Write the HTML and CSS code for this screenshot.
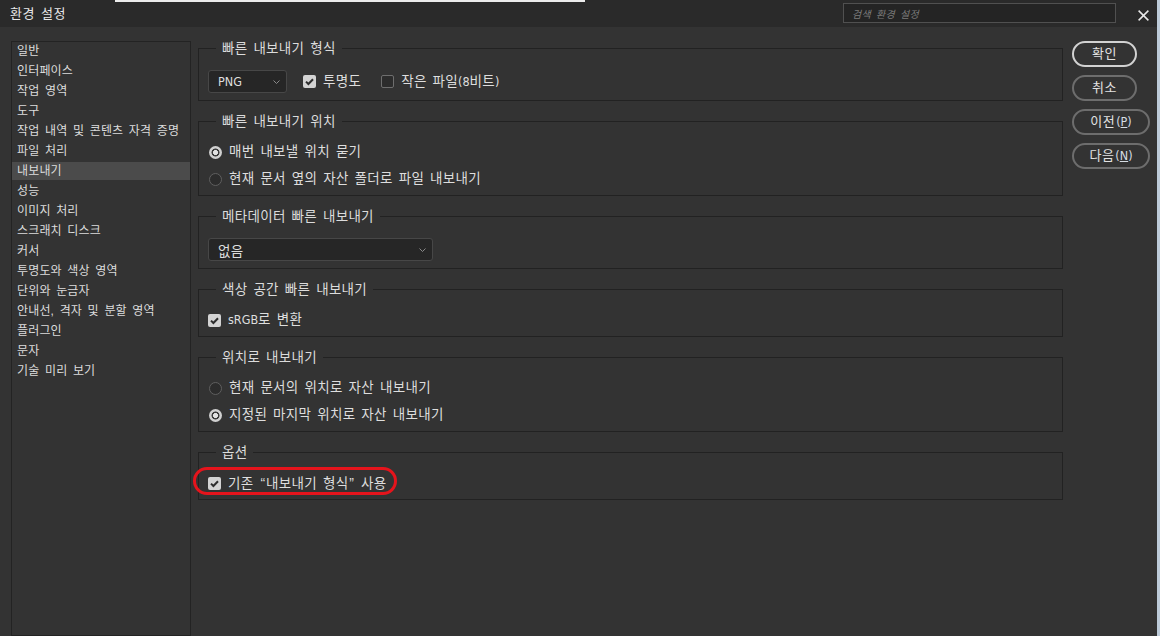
FILE: index.html
```html
<!DOCTYPE html>
<html lang="ko">
<head>
<meta charset="utf-8">
<title>환경 설정</title>
<link rel="stylesheet" href="styles.css">
</head>
<body>
<div class="window">
  <div class="backdrop"></div>
  <header class="titlebar">
    <span class="title">환경 설정</span>
    <div class="search"><span class="placeholder">검색 환경 설정</span></div>
    <button class="close" aria-label="닫기">
      <svg width="11" height="11" viewBox="0 0 11 11"><path d="M0.6 0.6L10.4 10.4M10.4 0.6L0.6 10.4" stroke="#e8e8e8" stroke-width="1.5" fill="none"/></svg>
    </button>
  </header>
  <div class="body">
    <nav class="sidebar">
      <div class="nav-item">일반</div>
      <div class="nav-item">인터페이스</div>
      <div class="nav-item">작업 영역</div>
      <div class="nav-item">도구</div>
      <div class="nav-item">작업 내역 및 콘텐츠 자격 증명</div>
      <div class="nav-item">파일 처리</div>
      <div class="nav-item selected">내보내기</div>
      <div class="nav-item">성능</div>
      <div class="nav-item">이미지 처리</div>
      <div class="nav-item">스크래치 디스크</div>
      <div class="nav-item">커서</div>
      <div class="nav-item">투명도와 색상 영역</div>
      <div class="nav-item">단위와 눈금자</div>
      <div class="nav-item">안내선, 격자 및 분할 영역</div>
      <div class="nav-item">플러그인</div>
      <div class="nav-item">문자</div>
      <div class="nav-item">기술 미리 보기</div>
    </nav>

    <main class="content">
      <section class="group">
        <div class="legend">빠른 내보내기 형식</div>
        <div class="group-body">
          <div class="controls">
            <div class="select select-format">
              <span class="lat">PNG</span>
              <svg class="chev" width="7" height="4" viewBox="0 0 7 4"><path d="M0.5 0.5L3.5 3.5L6.5 0.5" stroke="#8a8a8a" fill="none"/></svg>
            </div>
            <label class="opt opt-alpha"><span class="box checked"><svg width="13" height="13" viewBox="0 0 13 13"><path d="M3 6.6L5.4 9L10 4.2" stroke="#2d2d2d" stroke-width="2" fill="none"/></svg></span><span class="txt">투명도</span></label>
            <label class="opt opt-small"><span class="box"></span><span class="txt">작은 파일<span class="lat">(8</span>비트<span class="lat">)</span></span></label>
          </div>
        </div>
      </section>

      <section class="group">
        <div class="legend">빠른 내보내기 위치</div>
        <div class="group-body">
          <label class="opt"><span class="radio on"></span><span class="txt">매번 내보낼 위치 묻기</span></label>
          <label class="opt"><span class="radio"></span><span class="txt">현재 문서 옆의 자산 폴더로 파일 내보내기</span></label>
        </div>
      </section>

      <section class="group">
        <div class="legend">메타데이터 빠른 내보내기</div>
        <div class="group-body">
          <div class="controls">
            <div class="select select-meta">
              <span>없음</span>
              <svg class="chev" width="7" height="4" viewBox="0 0 7 4"><path d="M0.5 0.5L3.5 3.5L6.5 0.5" stroke="#8a8a8a" fill="none"/></svg>
            </div>
          </div>
        </div>
      </section>

      <section class="group">
        <div class="legend">색상 공간 빠른 내보내기</div>
        <div class="group-body">
          <label class="opt"><span class="box checked"><svg width="13" height="13" viewBox="0 0 13 13"><path d="M3 6.6L5.4 9L10 4.2" stroke="#2d2d2d" stroke-width="2" fill="none"/></svg></span><span class="txt"><span class="lat">sRGB</span>로 변환</span></label>
        </div>
      </section>

      <section class="group">
        <div class="legend">위치로 내보내기</div>
        <div class="group-body">
          <label class="opt"><span class="radio"></span><span class="txt">현재 문서의 위치로 자산 내보내기</span></label>
          <label class="opt"><span class="radio on"></span><span class="txt">지정된 마지막 위치로 자산 내보내기</span></label>
        </div>
      </section>

      <section class="group">
        <div class="legend">옵션</div>
        <div class="group-body">
          <label class="opt"><span class="box checked"><svg width="13" height="13" viewBox="0 0 13 13"><path d="M3 6.6L5.4 9L10 4.2" stroke="#2d2d2d" stroke-width="2" fill="none"/></svg></span><span class="txt">기존 <span class="quote">“</span>내보내기 형식<span class="quote">”</span> 사용</span><span class="annotation"></span></label>
        </div>
      </section>
    </main>

    <aside class="buttons">
      <button class="btn primary">확인</button>
      <button class="btn">취소</button>
      <button class="btn wide"><span>이전<span class="lat key">(<u>P</u>)</span></span></button>
      <button class="btn wide"><span>다음<span class="lat key">(<u>N</u>)</span></span></button>
    </aside>
  </div>
</div>
</body>
</html>
```

FILE: styles.css
```css
* { box-sizing: border-box; }

html, body {
  margin: 0;
  padding: 0;
}

body {
  width: 1160px;
  height: 636px;
  overflow: hidden;
  background: #333333;
  color: #dedede;
  font-family: "Liberation Sans", "Noto Sans CJK KR", sans-serif;
}

.window {
  display: flex;
  flex-direction: column;
  height: 636px;
  border-right: 3px solid #bdcbd9;
}

.backdrop {
  flex: none;
  height: 2px;
  background: linear-gradient(to right, #2a2a2a 0 115px, #ececec 115px 585px, #2a2a2a 585px);
}

.titlebar {
  flex: none;
  height: 25px;
  display: flex;
  align-items: flex-start;
  background: #2a2a2a;
  padding: 0 8px 0 10px;
}

.title {
  margin-top: 2px;
  font-size: 13px;
  line-height: 20px;
  letter-spacing: 0.45px;
  word-spacing: 2.1px;
  color: #e8e8e8;
}

.search {
  margin-left: auto;
  margin-top: 1px;
  width: 273px;
  height: 20px;
  border: 1px solid #505050;
  background: #242424;
  padding-left: 8px;
  display: flex;
  align-items: center;
}

.placeholder {
  font-size: 10px;
  font-style: italic;
  color: #7c7c7c;
  letter-spacing: 0.4px;
  word-spacing: 1.6px;
}

.close {
  margin-left: 22px;
  margin-top: 8px;
  width: 11px;
  height: 11px;
  padding: 0;
  border: 0;
  background: none;
  display: block;
}
.close svg { display: block; }

.body {
  flex: 1;
  min-height: 0;
  display: flex;
  padding: 14px 0 0 11px;
}

.sidebar {
  flex: none;
  width: 180px;
  border: 1px solid #232323;
  display: flex;
  flex-direction: column;
  gap: 2px;
}

.nav-item {
  height: 18px;
  line-height: 18px;
  padding-left: 5px;
  font-size: 12px;
  letter-spacing: 0.15px;
  word-spacing: 2.1px;
  white-space: nowrap;
  color: #dcdcdc;
}

.nav-item.selected {
  background: #4b4b4b;
}

.content {
  flex: none;
  width: 865px;
  margin-left: 7px;
  padding-top: 7px;
  display: flex;
  flex-direction: column;
  gap: 20px;
}

.group {
  border: 1px solid #222222;
  padding: 0 9px 7px;
}

.legend {
  width: fit-content;
  margin: -9px 0 0 8px;
  padding: 0 6px;
  background: #333333;
  font-size: 13.5px;
  line-height: 18px;
  letter-spacing: 0.3px;
  word-spacing: 1.9px;
  white-space: nowrap;
  color: #dcdcdc;
}

.group-body {
  padding-top: 12px;
  display: flex;
  flex-direction: column;
  gap: 9px;
}

.controls {
  display: flex;
  align-items: center;
  height: 23px;
}

.select {
  height: 23px;
  border: 1px solid #474747;
  border-radius: 3px;
  background: #262626;
  padding: 0 6px 0 9px;
  display: flex;
  align-items: center;
  justify-content: space-between;
  font-size: 13.5px;
  letter-spacing: 0.3px;
  color: #dedede;
}

.select-format { width: 79px; }
.select-meta { width: 225px; }

.chev { display: block; }

.opt {
  position: relative;
  display: flex;
  align-items: center;
  height: 18px;
  font-size: 13.5px;
  line-height: 18px;
  letter-spacing: 0.3px;
  word-spacing: 1.9px;
  white-space: nowrap;
  color: #dedede;
}

.opt-alpha { margin-left: 16px; }
.opt-small { margin-left: 20px; }

.lat {
  font-family: "Liberation Sans Narrow", "DejaVu Sans Condensed", "Liberation Sans", sans-serif;
  font-size: 12.5px;
  letter-spacing: 0;
}

.quote {
  font-family: "Liberation Sans", sans-serif;
  font-size: 14px;
  letter-spacing: 0;
  padding: 0 1px;
}

.box {
  flex: none;
  width: 13px;
  height: 13px;
  margin-right: 7px;
  border-radius: 2px;
  border: 1px solid #6e6e6e;
  background: #2c2c2c;
}

.box.checked {
  border: 0;
  background: #d3d3d3;
}
.box svg { display: block; }

.radio {
  flex: none;
  width: 13px;
  height: 13px;
  margin: 0 7px 0 1px;
  border-radius: 50%;
  border: 1px solid #5f5f5f;
  background: #2c2c2c;
}

.radio.on {
  border: 0;
  background: radial-gradient(circle, #e2e2e2 0 2.2px, #3c3c3c 2.8px 3.7px, #d0d0d0 4.3px);
}

.annotation {
  position: absolute;
  left: -15px;
  top: -7px;
  width: 204px;
  height: 28px;
  border: 3px solid #e5141c;
  border-radius: 14px;
}

.buttons {
  flex: none;
  width: 78px;
  margin-left: 9px;
  display: flex;
  flex-direction: column;
  align-items: flex-start;
  gap: 8px;
}

.btn {
  width: 65px;
  height: 26px;
  padding: 0;
  border: 2px solid #6d6d6d;
  border-radius: 13px;
  background: transparent;
  color: #e2e2e2;
  font-family: "Liberation Sans", "Noto Sans CJK KR", sans-serif;
  font-size: 13px;
  line-height: 20px;
  letter-spacing: 0.5px;
  display: flex;
  align-items: center;
  justify-content: center;
}

.btn.primary { border-color: #d2d2d2; }
.btn.wide { width: 78px; }

.key {
  font-size: 12.5px;
  margin-left: 1px;
  color: #d6dde4;
}
```
